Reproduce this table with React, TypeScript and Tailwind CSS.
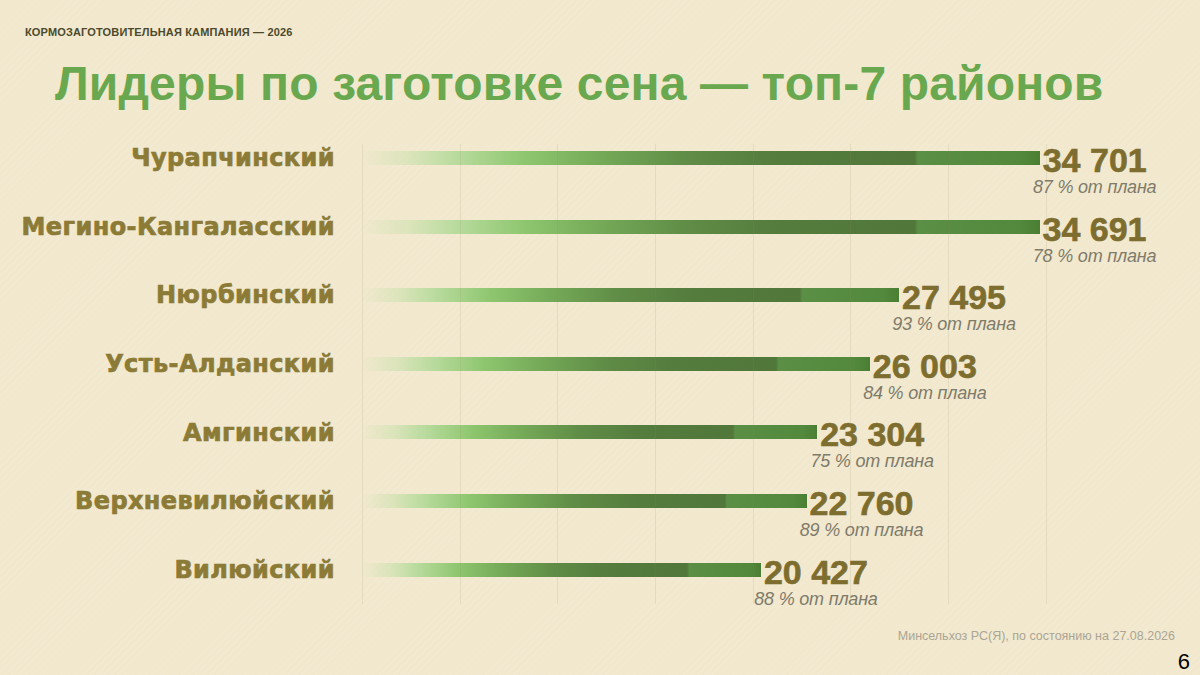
import React from "react";

type District = {
  name: string;
  value: number;
  plan: number;
};

const districts: District[] = [
  { name: "Чурапчинский", value: 34701, plan: 87 },
  { name: "Мегино-Кангаласский", value: 34691, plan: 78 },
  { name: "Нюрбинский", value: 27495, plan: 93 },
  { name: "Усть-Алданский", value: 26003, plan: 84 },
  { name: "Амгинский", value: 23304, plan: 75 },
  { name: "Верхневилюйский", value: 22760, plan: 89 },
  { name: "Вилюйский", value: 20427, plan: 88 },
];

// 5000 units per grid step, 97.65px per step
const PX_PER_UNIT = 97.65 / 5000;
const gridSteps = [0, 1, 2, 3, 4, 5, 6, 7];

function formatValue(v: number) {
  return v.toLocaleString("ru-RU").replace(/\s/g, " ");
}

function Bar({ value }: { value: number }) {
  return (
    <div
      className="mt-[27px] h-[14px] shrink-0 bg-[linear-gradient(to_right,rgba(205,228,175,0)_0%,rgba(200,225,170,0.55)_7%,#b8db9d_14%,#8ec66f_24%,#75aa58_35%,#5f8c46_48%,#547c3d_62%,#51783a_81.5%,#5a8f45_82%,#52893c_97%,#4a7e34_100%)]"
      style={{ width: value * PX_PER_UNIT }}
    ></div>
  );
}

function Row({ item }: { item: District }) {
  return (
    <div className="flex h-[68.6px] flex-row items-start">
      <div className="flex h-full w-[335px] shrink-0 items-center justify-end">
        <span className="font-['DejaVu_Sans',sans-serif] text-[24px] font-bold leading-[28px] tracking-[0.4px] text-[#8c7b36] whitespace-nowrap [-webkit-text-stroke:0.7px_#8c7b36]">
          {item.name}
        </span>
      </div>
      <div className="ml-[27px] flex flex-row items-start">
        <Bar value={item.value} />
        <div className="ml-[3px] mt-[19px] flex flex-col items-center">
          <span className="text-[34px] font-bold leading-[34px] text-[#7d6d2e] whitespace-nowrap [-webkit-text-stroke:0.6px_#7d6d2e]">
            {formatValue(item.value)}
          </span>
          <div className="flex w-0 justify-center">
            <span className="text-[18px] italic leading-[20px] tracking-[-0.2px] text-[#7f7b6b] whitespace-nowrap">
              {item.plan} % от плана
            </span>
          </div>
        </div>
      </div>
    </div>
  );
}

export default function App() {
  return (
    <div className="flex h-[675px] w-[1200px] flex-col overflow-hidden bg-[#f1e8cd] bg-[repeating-linear-gradient(135deg,rgba(255,255,255,0.10)_0px,rgba(255,255,255,0.10)_1px,transparent_1px,transparent_5px)] font-['Liberation_Sans',Arial,sans-serif]">
      <div className="pl-[25px] pt-[25px] text-[11px] font-bold leading-[14px] tracking-[0.15px] text-[#4d4a2c]">
        КОРМОЗАГОТОВИТЕЛЬНАЯ КАМПАНИЯ — 2026
      </div>
      <h1 className="mt-[17px] pl-[55px] text-[48px] font-bold leading-[56px] tracking-[0.15px] text-[#6aa84f] whitespace-nowrap">
        Лидеры по заготовке сена — топ-7 районов
      </h1>

      <div className="relative mt-[12px] flex flex-col">
        {/* grid lines behind the bars */}
        <div className="pointer-events-none absolute bottom-0 left-[362px] top-[20px]">
          {gridSteps.map((s) => (
            <div
              key={s}
              className="absolute bottom-0 top-0 w-px bg-[rgba(150,138,95,0.14)]"
              style={{ left: s * 5000 * PX_PER_UNIT }}
            ></div>
          ))}
        </div>
        {districts.map((d) => (
          <Row key={d.name} item={d} />
        ))}
      </div>

      <div className="mt-[24px] pr-[25px] text-right text-[12.5px] leading-[16px] text-[#aba595]">
        Минсельхоз РС(Я), по состоянию на 27.08.2026
      </div>
      <div className="mt-[6px] pr-[10px] text-right text-[22px] leading-[24px] text-black">
        6
      </div>
    </div>
  );
}
